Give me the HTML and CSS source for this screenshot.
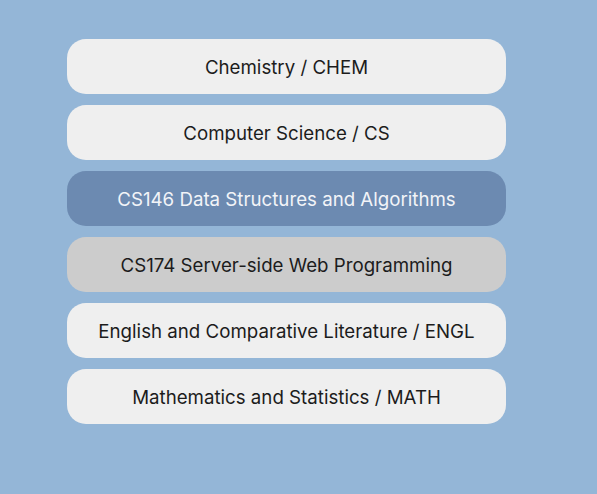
FILE: index.html
```html
<!DOCTYPE html>
<html>
<head>
<meta charset="utf-8">
<link rel="stylesheet" href="styles.css">
</head>
<body>
<div class="list">
  <div class="item">Chemistry / CHEM</div>
  <div class="item">Computer Science / CS</div>
  <div class="item selected">CS146 Data Structures and Algorithms</div>
  <div class="item hover">CS174 Server-side Web Programming</div>
  <div class="item">English and Comparative Literature / ENGL</div>
  <div class="item">Mathematics and Statistics / MATH</div>
</div>
</body>
</html>
```
FILE: styles.css
```css
html, body {
  margin: 0;
  height: 100%;
}
body {
  background: #94b6d7;
  font-family: Inter, "Liberation Sans", sans-serif;
}
.list {
  display: flex;
  flex-direction: column;
  gap: 11px;
  padding: 39px 0 0 67px;
  width: 439px;
}
.item {
  box-sizing: border-box;
  height: 55px;
  padding-top: 2px;
  border-radius: 19px;
  background: #efefef;
  color: #1c1c1c;
  font-size: 18.7px;
  display: flex;
  align-items: center;
  justify-content: center;
}
.item.selected {
  background: #6c8ab1;
  color: #f2f4f8;
}
.item.hover {
  background: #cccccc;
}
```
